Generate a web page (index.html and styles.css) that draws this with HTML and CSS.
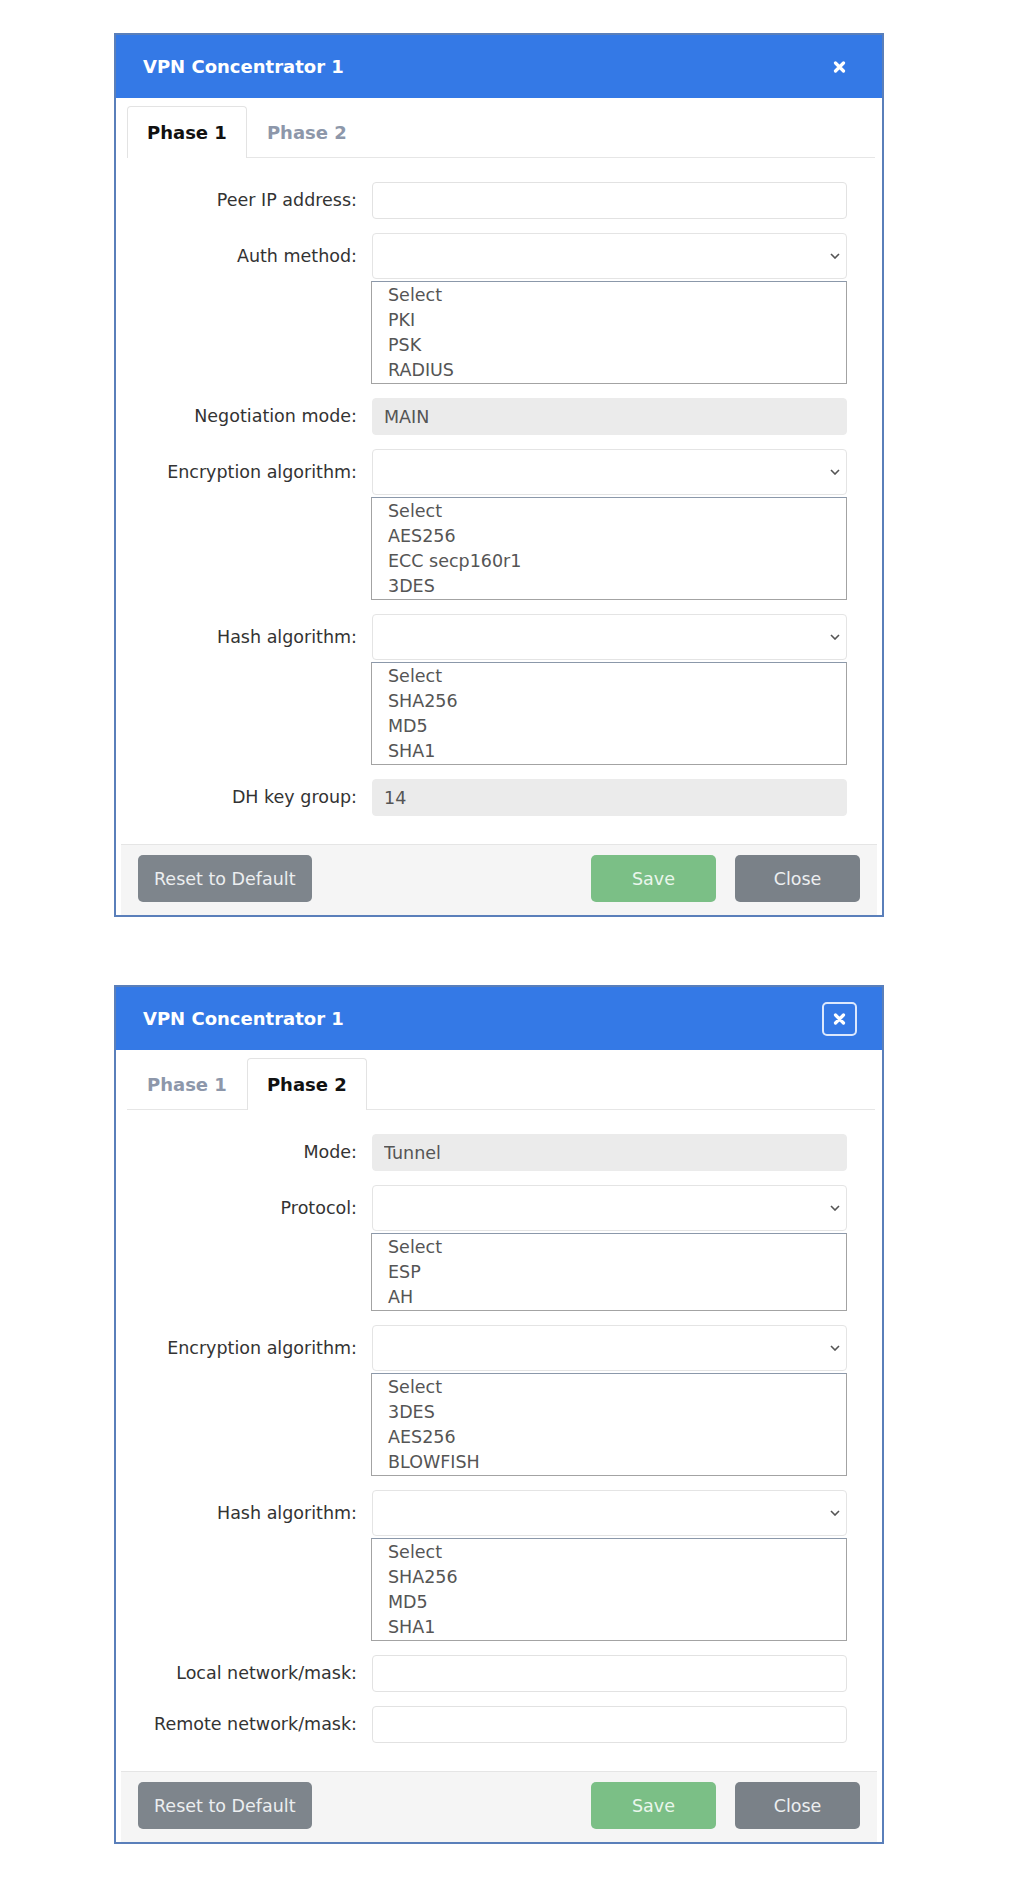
FILE: index.html
```html
<!DOCTYPE html>
<html>
  <head>
    <meta charset="utf-8"/>
    <meta name="viewport" content="width=device-width, initial-scale=1">
    <title>VPN Concentrator 1</title>
    <link rel="stylesheet" href="styles.css">
  </head>
<body>

<div class="page">

  <!-- Phase 1 settings -->
  <div class="modal">
    <div class="modal-header">
      <h4 class="modal-title">VPN Concentrator 1</h4>
      <button class="close-btn" aria-label="Close">
        <svg width="13" height="12" viewBox="0 0 13 12"><path d="M2.5 2l8 8M10.5 2l-8 8" stroke="#fff" stroke-width="3.2" stroke-linecap="round"/></svg>
      </button>
    </div>
    <div class="tabs">
      <button class="tab active">Phase 1</button>
      <button class="tab">Phase 2</button>
    </div>
    <div class="form">
      <label class="field-label">Peer IP address:</label>
      <input class="input" type="text">

      <label class="field-label for-select">Auth method:</label>
      <div>
        <div class="select">
          <svg width="10" height="6" viewBox="0 0 10 6"><path d="M1 1l4 4 4-4" fill="none" stroke="#555" stroke-width="1.6"/></svg>
        </div>
        <ul class="listbox">
          <li>Select</li>
          <li>PKI</li>
          <li>PSK</li>
          <li>RADIUS</li>
        </ul>
      </div>

      <label class="field-label">Negotiation mode:</label>
      <input class="input" type="text" value="MAIN" readonly>

      <label class="field-label for-select">Encryption algorithm:</label>
      <div>
        <div class="select">
          <svg width="10" height="6" viewBox="0 0 10 6"><path d="M1 1l4 4 4-4" fill="none" stroke="#555" stroke-width="1.6"/></svg>
        </div>
        <ul class="listbox">
          <li>Select</li>
          <li>AES256</li>
          <li>ECC secp160r1</li>
          <li>3DES</li>
        </ul>
      </div>

      <label class="field-label for-select">Hash algorithm:</label>
      <div>
        <div class="select">
          <svg width="10" height="6" viewBox="0 0 10 6"><path d="M1 1l4 4 4-4" fill="none" stroke="#555" stroke-width="1.6"/></svg>
        </div>
        <ul class="listbox">
          <li>Select</li>
          <li>SHA256</li>
          <li>MD5</li>
          <li>SHA1</li>
        </ul>
      </div>

      <label class="field-label">DH key group:</label>
      <input class="input" type="text" value="14" readonly>
    </div>
    <div class="modal-footer">
      <button class="btn btn-reset">Reset to Default</button>
      <button class="btn btn-save">Save</button>
      <button class="btn btn-close">Close</button>
    </div>
  </div>

  <!-- Phase 2 settings -->
  <div class="modal">
    <div class="modal-header">
      <h4 class="modal-title">VPN Concentrator 1</h4>
      <button class="close-btn focused" aria-label="Close">
        <svg width="13" height="12" viewBox="0 0 13 12"><path d="M2.5 2l8 8M10.5 2l-8 8" stroke="#fff" stroke-width="3.2" stroke-linecap="round"/></svg>
      </button>
    </div>
    <div class="tabs">
      <button class="tab">Phase 1</button>
      <button class="tab active">Phase 2</button>
    </div>
    <div class="form">
      <label class="field-label">Mode:</label>
      <input class="input" type="text" value="Tunnel" readonly>

      <label class="field-label for-select">Protocol:</label>
      <div>
        <div class="select">
          <svg width="10" height="6" viewBox="0 0 10 6"><path d="M1 1l4 4 4-4" fill="none" stroke="#555" stroke-width="1.6"/></svg>
        </div>
        <ul class="listbox">
          <li>Select</li>
          <li>ESP</li>
          <li>AH</li>
        </ul>
      </div>

      <label class="field-label for-select">Encryption algorithm:</label>
      <div>
        <div class="select">
          <svg width="10" height="6" viewBox="0 0 10 6"><path d="M1 1l4 4 4-4" fill="none" stroke="#555" stroke-width="1.6"/></svg>
        </div>
        <ul class="listbox">
          <li>Select</li>
          <li>3DES</li>
          <li>AES256</li>
          <li>BLOWFISH</li>
        </ul>
      </div>

      <label class="field-label for-select">Hash algorithm:</label>
      <div>
        <div class="select">
          <svg width="10" height="6" viewBox="0 0 10 6"><path d="M1 1l4 4 4-4" fill="none" stroke="#555" stroke-width="1.6"/></svg>
        </div>
        <ul class="listbox">
          <li>Select</li>
          <li>SHA256</li>
          <li>MD5</li>
          <li>SHA1</li>
        </ul>
      </div>

      <label class="field-label">Local network/mask:</label>
      <input class="input" type="text">

      <label class="field-label">Remote network/mask:</label>
      <input class="input" type="text">
    </div>
    <div class="modal-footer">
      <button class="btn btn-reset">Reset to Default</button>
      <button class="btn btn-save">Save</button>
      <button class="btn btn-close">Close</button>
    </div>
  </div>

</div>

</body>
</html>
```

FILE: styles.css
```css
* {
  box-sizing: border-box;
}

body {
  margin: 0;
  background-color: #fff;
  font-family: "DejaVu Sans", Verdana, sans-serif;
  color: #333;
}

.page {
  padding: 33px 0 40px 114px;
}

.modal {
  width: 770px;
  border: 2px solid #5a7fba;
  background-color: #fff;
  margin-bottom: 68px;
}

.modal-header {
  display: flex;
  align-items: center;
  justify-content: space-between;
  height: 63px;
  padding: 0 25px 0 27px;
  background-color: #3479e6;
}

.modal-title {
  margin: 0;
  font-size: 18px;
  font-weight: bold;
  color: #fff;
}

.close-btn {
  display: flex;
  align-items: center;
  justify-content: center;
  width: 35px;
  height: 34px;
  padding: 0;
  background: none;
  border: 2px solid transparent;
  border-radius: 5px;
  cursor: pointer;
}

.close-btn.focused {
  border-color: #dce8fd;
}

/* tab strip */
.tabs {
  display: flex;
  margin: 8px 7px 0 11px;
  border-bottom: 1px solid #e6e6e6;
}

.tab {
  height: 51px;
  margin-bottom: -1px;
  padding: 0 19px;
  font-family: inherit;
  font-size: 18px;
  font-weight: bold;
  color: #8d97aa;
  background: none;
  border: 1px solid transparent;
  border-bottom: none;
  border-radius: 4px 4px 0 0;
  cursor: pointer;
}

.tab.active {
  height: 52px;
  color: #111;
  background-color: #fff;
  border-color: #e3e3e3;
}

/* label / control grid */
.form {
  display: grid;
  grid-template-columns: 225px 1fr;
  column-gap: 15px;
  row-gap: 14px;
  padding: 24px 35px 28px 16px;
}

.field-label {
  text-align: right;
  font-size: 17.5px;
  line-height: 37px;
  white-space: nowrap;
}

.field-label.for-select {
  line-height: 46px;
}

.input {
  display: block;
  width: 100%;
  height: 37px;
  padding: 0 11px;
  font-family: inherit;
  font-size: 17.5px;
  color: #555;
  background-color: #fff;
  border: 1px solid #e2e2e2;
  border-radius: 4px;
  outline: none;
}

.input[readonly] {
  background-color: #ebebeb;
  border-color: #ebebeb;
}

.select {
  display: flex;
  align-items: center;
  justify-content: flex-end;
  height: 46px;
  padding-right: 6px;
  background-color: #fff;
  border: 1px solid #e4e4e4;
  border-radius: 4px;
}

.listbox {
  margin: 2px 0 0 -1px;
  padding: 1px 0 0 16px;
  list-style: none;
  font-size: 17.5px;
  line-height: 25px;
  color: #555;
  border: 1px solid #a3a3a3;
  border-top-color: #8b98aa;
}

.modal-footer {
  display: flex;
  gap: 19px;
  margin: 0 5px;
  padding: 10px 17px 13px;
  background-color: #f5f5f5;
  border-top: 1px solid #e5e5e5;
}

.btn {
  height: 47px;
  min-width: 125px;
  padding: 0 16px;
  font-family: inherit;
  font-size: 17.5px;
  color: #eceef0;
  border: none;
  border-radius: 5px;
  cursor: pointer;
}

.btn-reset {
  margin-right: auto;
  background-color: #7e858c;
}

.btn-save {
  background-color: #7bbf86;
  color: #eaf6ec;
}

.btn-close {
  background-color: #7a8188;
}
```
